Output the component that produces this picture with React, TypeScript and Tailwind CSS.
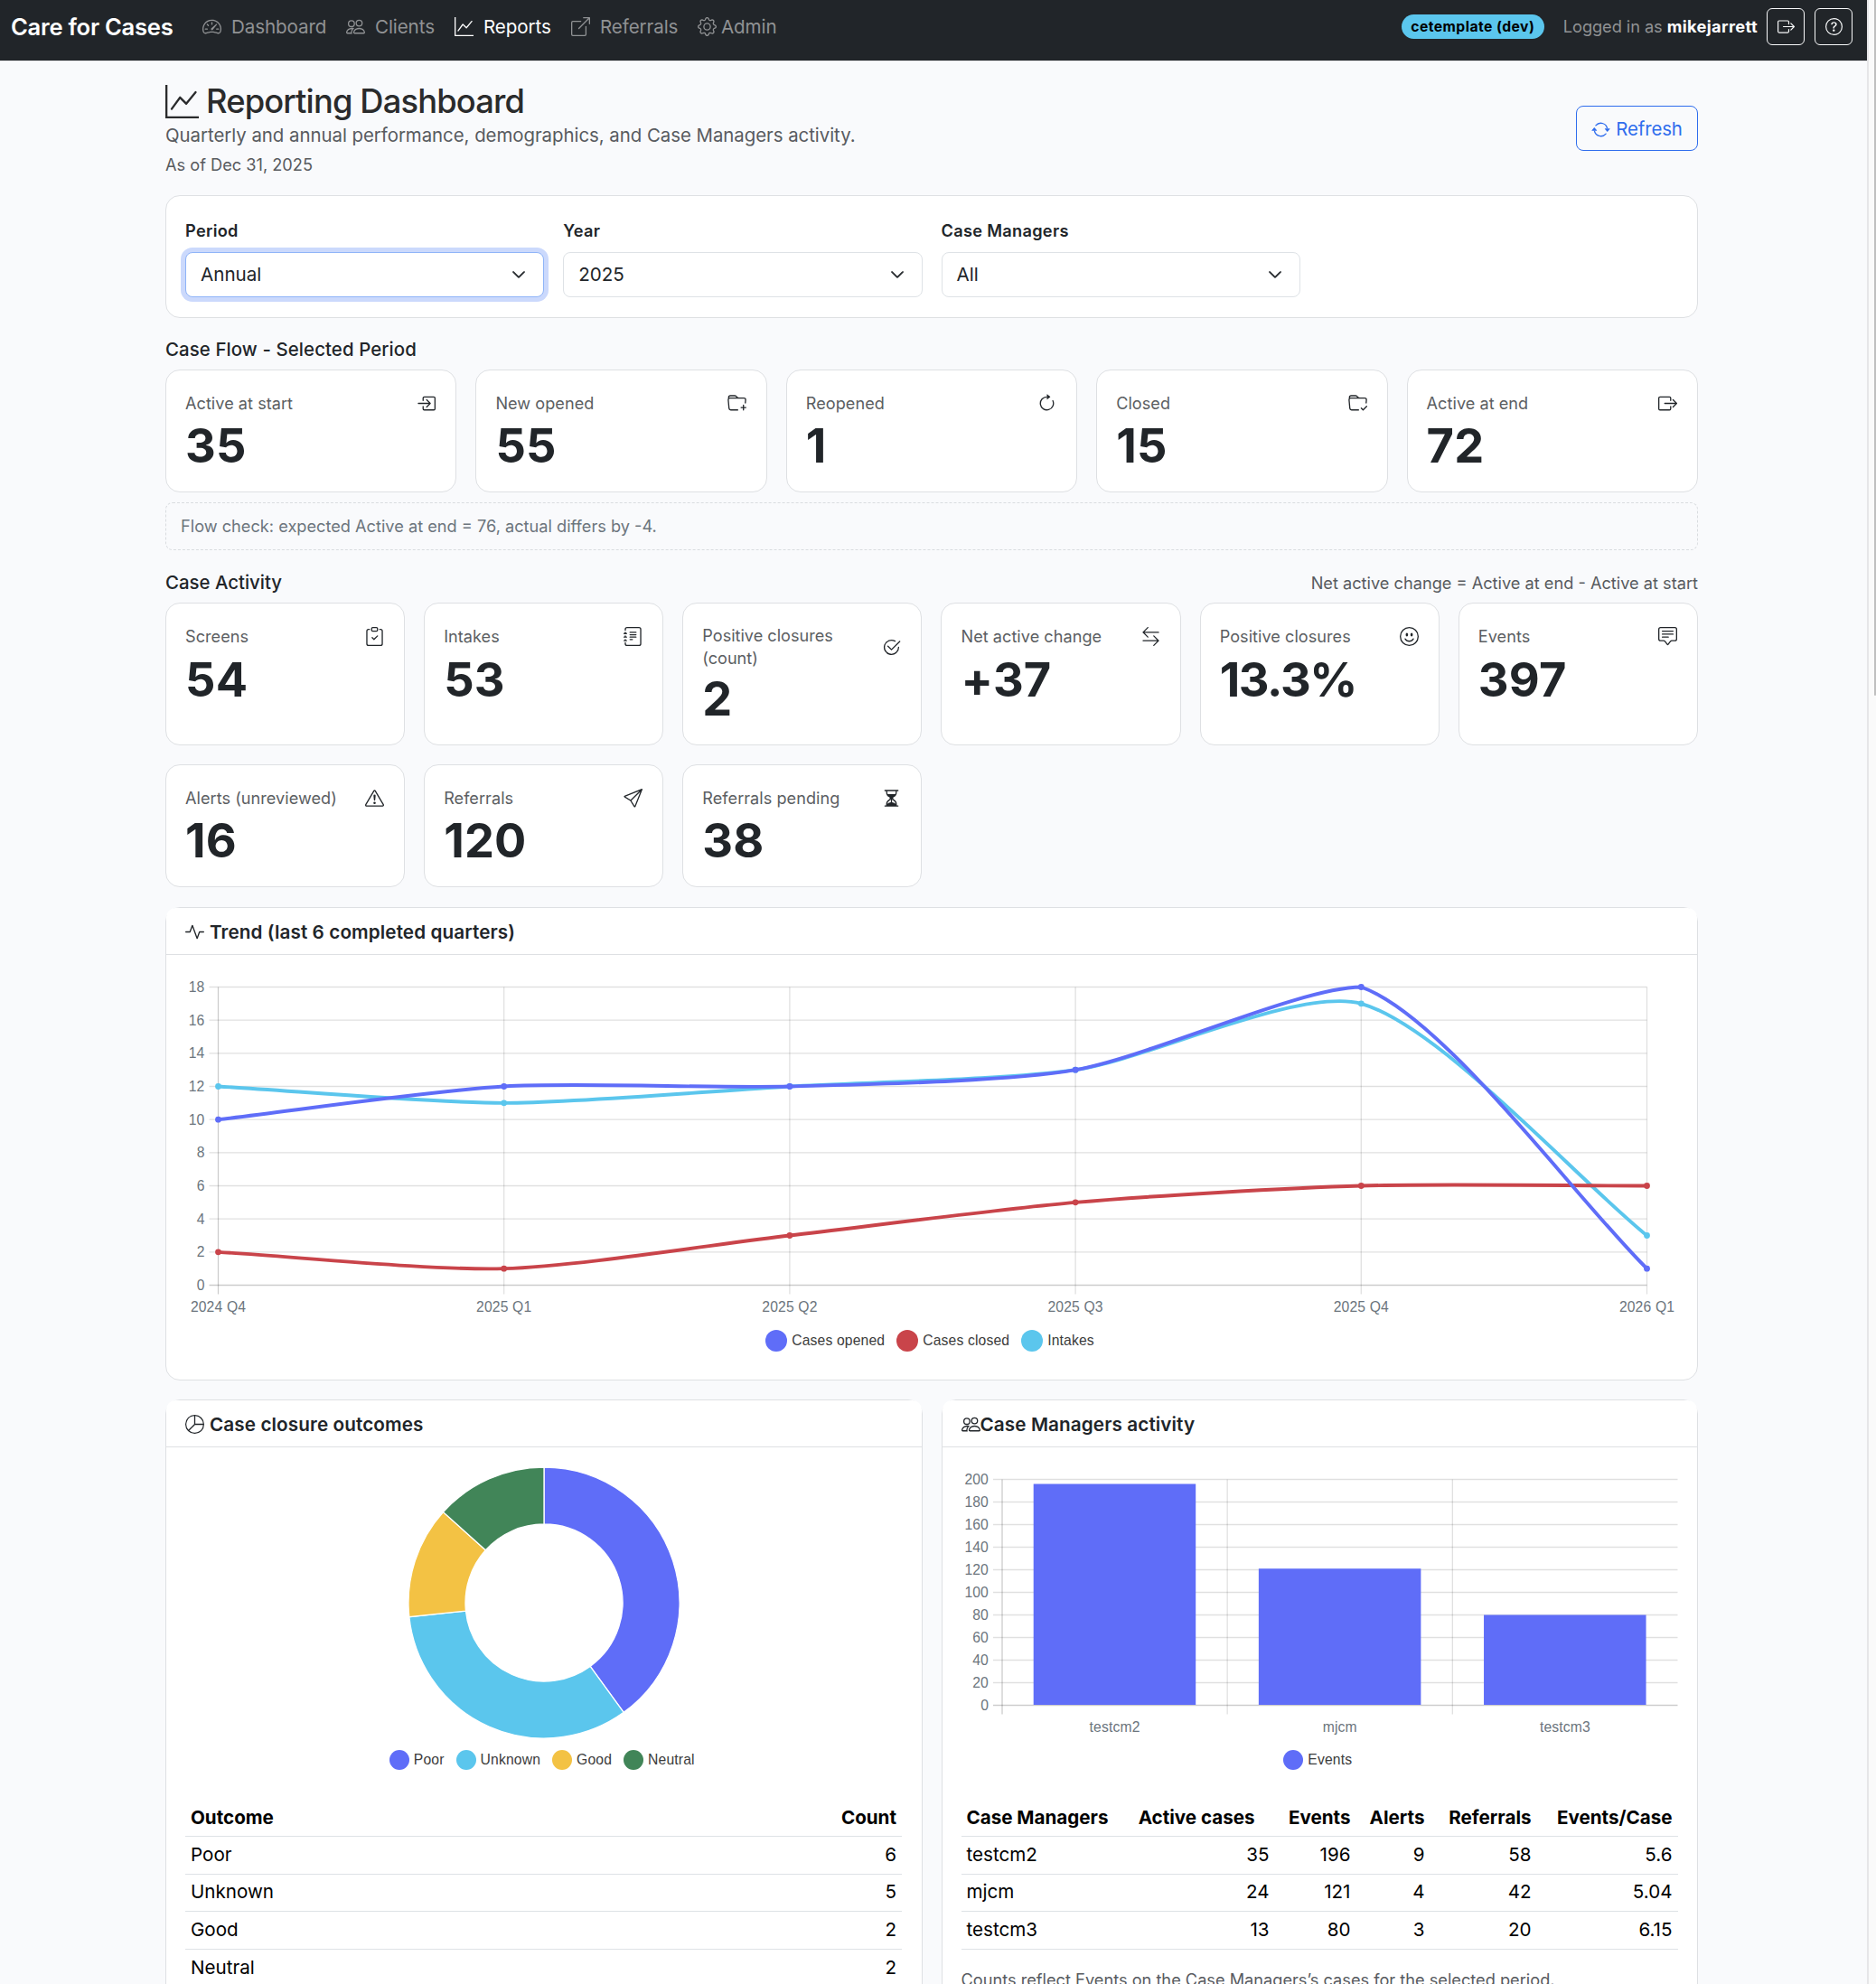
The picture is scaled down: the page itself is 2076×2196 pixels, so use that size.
import React from 'react';
import {
  BsSpeedometer2, BsPeople, BsGraphUp, BsBoxArrowUpRight, BsGear, BsBoxArrowRight, BsQuestionCircle,
  BsArrowRepeat, BsBoxArrowInRight, BsFolderPlus, BsArrowClockwise, BsFolderCheck, BsClipboardCheck,
  BsJournalText, BsCheck2Circle, BsArrowLeftRight, BsEmojiSmile, BsChatSquareText, BsExclamationTriangle,
  BsSend, BsHourglassSplit, BsActivity, BsPieChart, BsChevronDown
} from 'react-icons/bs';
import type { IconType } from 'react-icons';

const BLUE = '#5f6df8';
const RED = '#c9444a';
const CYAN = '#5bc6ed';
const YELLOW = '#f3c244';
const GREEN = '#418558';

const navItems: { label: string; icon: IconType; active?: boolean; tight?: boolean; width: string }[] = [
  { label: 'Dashboard', icon: BsSpeedometer2, width: 'w-[159px]' },
  { label: 'Clients', icon: BsPeople, width: 'w-[120px]' },
  { label: 'Reports', icon: BsGraphUp, active: true, width: 'w-[129px]' },
  { label: 'Referrals', icon: BsBoxArrowUpRight, width: 'w-[140px]' },
  { label: 'Admin', icon: BsGear, tight: true, width: 'w-[100px]' },
];

const filters = [
  { label: 'Period', value: 'Annual', focused: true },
  { label: 'Year', value: '2025' },
  { label: 'Case Managers', value: 'All' },
];

interface Stat {
  label: string;
  value: string;
  icon: IconType;
}

const flowStats: Stat[] = [
  { label: 'Active at start', value: '35', icon: BsBoxArrowInRight },
  { label: 'New opened', value: '55', icon: BsFolderPlus },
  { label: 'Reopened', value: '1', icon: BsArrowClockwise },
  { label: 'Closed', value: '15', icon: BsFolderCheck },
  { label: 'Active at end', value: '72', icon: BsBoxArrowRight },
];

const activityStats: Stat[] = [
  { label: 'Screens', value: '54', icon: BsClipboardCheck },
  { label: 'Intakes', value: '53', icon: BsJournalText },
  { label: 'Positive closures (count)', value: '2', icon: BsCheck2Circle },
  { label: 'Net active change', value: '+37', icon: BsArrowLeftRight },
  { label: 'Positive closures', value: '13.3%', icon: BsEmojiSmile },
  { label: 'Events', value: '397', icon: BsChatSquareText },
  { label: 'Alerts (unreviewed)', value: '16', icon: BsExclamationTriangle },
  { label: 'Referrals', value: '120', icon: BsSend },
  { label: 'Referrals pending', value: '38', icon: BsHourglassSplit },
];

const quarters = ['2024 Q4', '2025 Q1', '2025 Q2', '2025 Q3', '2025 Q4', '2026 Q1'];
const series = [
  { color: CYAN, data: [12, 11, 12, 13, 17, 3] },
  { color: RED, data: [2, 1, 3, 5, 6, 6] },
  { color: BLUE, data: [10, 12, 12, 13, 18, 1] },
];

const outcomes = [
  { name: 'Poor', count: 6, color: BLUE },
  { name: 'Unknown', count: 5, color: CYAN },
  { name: 'Good', count: 2, color: YELLOW },
  { name: 'Neutral', count: 2, color: GREEN },
];

const managers = [
  { name: 'testcm2', active: 35, events: 196, alerts: 9, referrals: 58, ratio: '5.6' },
  { name: 'mjcm', active: 24, events: 121, alerts: 4, referrals: 42, ratio: '5.04' },
  { name: 'testcm3', active: 13, events: 80, alerts: 3, referrals: 20, ratio: '6.15' },
];

// Same spline control points as Chart.js, clamped to the plot area
const splinePath = (pts: number[][], tension: number, top: number, bottom: number) => {
  const dist = (a: number[], b: number[]) => Math.hypot(a[0] - b[0], a[1] - b[1]);
  const clamp = (y: number) => Math.max(top, Math.min(bottom, y));
  const cps = pts.map((p, i) => {
    const prev = pts[Math.max(0, i - 1)];
    const next = pts[Math.min(pts.length - 1, i + 1)];
    const d1 = dist(prev, p);
    const d2 = dist(p, next);
    const fa = (tension * d1) / (d1 + d2);
    const fb = (tension * d2) / (d1 + d2);
    return {
      inX: p[0] - fa * (next[0] - prev[0]),
      inY: clamp(p[1] - fa * (next[1] - prev[1])),
      outX: p[0] + fb * (next[0] - prev[0]),
      outY: clamp(p[1] + fb * (next[1] - prev[1])),
    };
  });
  let d = `M${pts[0][0]} ${pts[0][1]}`;
  for (let i = 1; i < pts.length; i++) {
    d += ` C${cps[i - 1].outX} ${cps[i - 1].outY} ${cps[i].inX} ${cps[i].inY} ${pts[i][0]} ${pts[i][1]}`;
  }
  return d;
};

const chartText = "font-['Liberation_Sans',Arial,sans-serif] text-[15.7px] tracking-[0.15px]";

const StatCard: React.FC<{ stat: Stat; tall?: boolean }> = ({ stat, tall }) => {
  const Icon = stat.icon;
  const twoLines = stat.label.includes('(count)');
  return (
    <div className={`rounded-[16px] border border-[#dee0e3] bg-white pl-[21px] pr-[22px] ${twoLines ? 'pt-[23px]' : 'pt-[21px]'} ${tall ? 'h-[158px]' : 'h-[136px]'}`}>
      <div className={`flex items-center justify-between ${twoLines ? 'h-[50px]' : 'h-[31px]'}`}>
        <span className={`text-[18.1px] leading-[25px] text-[#5b5e62] ${twoLines ? 'w-[160px]' : 'whitespace-nowrap tracking-[0.04px]'}`}>{stat.label}</span>
        <Icon size={21} className="shrink-0 text-[#212529]" />
      </div>
      <div className={`text-[52.3px] font-bold leading-[60px] text-[#212529] ${stat.value.includes('%') ? 'tracking-[-1.4px]' : 'tracking-[0.2px]'} ${twoLines || tall ? 'mt-[2px]' : 'mt-[1px]'}`}>{stat.value}</div>
    </div>
  );
};

const CardHeader: React.FC<{ icon: IconType; title: string; tight?: boolean }> = ({ icon: Icon, title, tight }) => (
  <div className={`flex h-[52px] items-center rounded-t-[10px] border-b border-[#dee0e3] bg-white px-[21px] pt-[2px] ${tight ? '' : 'gap-[6px]'}`}>
    <Icon size={21} className="text-[#212529]" />
    <h2 className="text-[20.7px] font-semibold tracking-[0.1px] text-[#212529]">{title}</h2>
  </div>
);

const Legend: React.FC<{ items: { name: string; color: string }[]; size?: number }> = ({ items, size = 22 }) => (
  <div className="flex h-[24px] items-center justify-center gap-[13px] pr-[4px]">
    {items.map(item => (
      <div key={item.name} className="flex items-center gap-[5px]">
        <svg width={size} height={size} viewBox="0 0 24 24"><circle cx="12" cy="12" r="12" fill={item.color} /></svg>
        <span className={`${chartText} text-[#3c3c3c]`}>{item.name}</span>
      </div>
    ))}
  </div>
);

const TrendChart: React.FC = () => {
  const left = 57.5;
  const right = 1638.5;
  const top = 35.5;
  const bottom = 365.5;
  const x = (i: number) => left + ((right - left) * i) / 5;
  const y = (v: number) => bottom - ((bottom - top) * v) / 18;
  return (
    <svg width="1694" height="412" viewBox="0 0 1694 412" className="block">
      {[0, 2, 4, 6, 8, 10, 12, 14, 16, 18].map(v => (
        <g key={v}>
          <line x1={left - 10} x2={right} y1={y(v)} y2={y(v)} stroke="#000" strokeOpacity={v === 0 ? 0.2 : 0.12} strokeWidth="1.3" />
          <text x={left - 15} y={y(v) + 5.5} textAnchor="end" fill="#6c757d" className={chartText}>{v}</text>
        </g>
      ))}
      {quarters.map((q, i) => (
        <g key={q}>
          <line x1={x(i)} x2={x(i)} y1={top} y2={bottom + 10} stroke="#000" strokeOpacity={i === 0 ? 0.2 : 0.12} strokeWidth="1.3" />
          <text x={x(i)} y={bottom + 29.5} textAnchor="middle" fill="#6c757d" className={chartText}>{q}</text>
        </g>
      ))}
      {series.map(s => {
        const pts = s.data.map((v, i) => [x(i), y(v)]);
        return (
          <g key={s.color}>
            <path d={splinePath(pts, 0.25, top, bottom)} fill="none" stroke={s.color} strokeWidth="3.9" />
            {pts.map(([cx, cy]) => <circle key={cx} cx={cx} cy={cy} r="3.4" fill={s.color} />)}
          </g>
        );
      })}
    </svg>
  );
};

const OutcomeChart: React.FC = () => {
  const total = outcomes.reduce((sum, o) => sum + o.count, 0);
  const point = (t: number, r: number) => {
    const a = t * Math.PI * 2 - Math.PI / 2;
    return `${150 + r * Math.cos(a)} ${150 + r * Math.sin(a)}`;
  };
  let start = 0;
  return (
    <svg width="300" height="300" viewBox="0 0 300 300" className="block">
      {outcomes.map(o => {
        const from = start;
        const to = start + o.count / total;
        start = to;
        return (
          <path
            key={o.name}
            d={`M${point(from, 150)} A150 150 0 0 1 ${point(to, 150)} L${point(to, 87)} A87 87 0 0 0 ${point(from, 87)} Z`}
            fill={o.color}
            stroke="#fff"
            strokeWidth="1.3"
          />
        );
      })}
    </svg>
  );
};

const ManagersChart: React.FC = () => {
  const left = 66;
  const right = 813.5;
  const top = 35.5;
  const bottom = 285.5;
  const step = (right - left) / 3;
  const y = (v: number) => bottom - ((bottom - top) * v) / 200;
  return (
    <svg width="835" height="326" viewBox="0 0 835 326" className="block">
      {[0, 20, 40, 60, 80, 100, 120, 140, 160, 180, 200].map(v => (
        <g key={v}>
          <line x1={left - 10} x2={right} y1={y(v)} y2={y(v)} stroke="#000" strokeOpacity={v === 0 ? 0.2 : 0.12} strokeWidth="1.3" />
          <text x={left - 15} y={y(v) + 5.5} textAnchor="end" fill="#6c757d" className={chartText}>{v}</text>
        </g>
      ))}
      {managers.map((m, i) => (
        <g key={m.name}>
          <line x1={left + step * i} x2={left + step * i} y1={top} y2={bottom + 10} stroke="#000" strokeOpacity={i === 0 ? 0.2 : 0.12} strokeWidth="1.3" />
          <rect x={left + step * i + 34.7} y={y(m.events)} width="179.5" height={bottom - y(m.events) - 0.5} fill={BLUE} />
          <text x={left + step * (i + 0.5)} y={bottom + 29.5} textAnchor="middle" fill="#6c757d" className={chartText}>{m.name}</text>
        </g>
      ))}
    </svg>
  );
};

const App: React.FC = () => {
  return (
    <div className="flex h-[2196px] w-[2076px] overflow-hidden bg-[#f9fafc] font-[Inter,sans-serif] text-[#212529]">
      <div className="w-[2066px] shrink-0">
        <nav className="flex h-[67px] items-start justify-between bg-[#212529] pl-[12px] pr-[16px]">
          <div className="flex h-[60px] items-center">
            <span className="w-[212px] whitespace-nowrap text-[25.6px] font-semibold tracking-[-0.25px] text-white">Care for Cases</span>
            {navItems.map(item => {
              const Icon = item.icon;
              return (
                <a key={item.label} className={`flex items-center whitespace-nowrap text-[20.6px] tracking-[-0.1px] ${item.width} ${item.tight ? 'gap-[5px]' : 'gap-[11px]'} ${item.active ? 'text-white' : 'text-[#909294]'}`}>
                  <Icon size={21} />
                  {item.label}
                </a>
              );
            })}
          </div>
          <div className="flex h-[59px] items-center">
            <span className="mr-[21px] flex h-[27px] w-[158px] items-center justify-center rounded-full bg-[#5bc6ed] text-[15.7px] font-bold tracking-[0.45px] text-black">cetemplate (dev)</span>
            <span className="mr-[10px] whitespace-nowrap text-[18.3px] tracking-[-0.1px] text-[#909294]">Logged in as <b className="font-bold tracking-[0.35px] text-white">mikejarrett</b></span>
            <button className="mr-[11px] flex h-[41px] w-[42px] items-center justify-center rounded-[6px] border border-[#f8f9fa] text-[#f8f9fa]"><BsBoxArrowRight size={19} /></button>
            <button className="flex h-[41px] w-[42px] items-center justify-center rounded-[6px] border border-[#f8f9fa] text-[#f8f9fa]"><BsQuestionCircle size={19} /></button>
          </div>
        </nav>

        <div className="h-px bg-[#e6e7e9]" />
        <main className="ml-[183px] w-[1696px]">
          <header className="flex h-[148px] justify-between pt-[23px]">
            <div>
              <h1 className="flex h-[42px] items-center gap-[8px] text-[36.3px] font-medium tracking-[-0.85px] text-[#2a2b2c]"><BsGraphUp size={37} />Reporting Dashboard</h1>
              <p className="mt-[1px] text-[20.4px] leading-[31px] tracking-[-0.03px] text-[#585b5f]">Quarterly and annual performance, demographics, and Case Managers activity.</p>
              <p className="mt-[3px] text-[18.2px] leading-[28px] text-[#585b5f]">As of Dec 31, 2025</p>
            </div>
            <button className="mt-[26px] flex h-[50px] w-[135px] items-center justify-center gap-[6px] rounded-[8px] border border-[#2f6ded] pt-[2px] text-[20.4px] tracking-[-0.1px] text-[#2f6ded]"><BsArrowRepeat size={21} />Refresh</button>
          </header>

          <section className="grid h-[136px] grid-cols-4 gap-[21px] rounded-[16px] border border-[#dee0e3] bg-white px-[21px] pt-[24px]">
            {filters.map(f => (
              <div key={f.label}>
                <label className="block h-[38px] text-[18.2px] font-semibold leading-[28px] tracking-[0.3px]">{f.label}</label>
                <div className={`flex h-[50px] items-center justify-between rounded-[8px] border bg-white pl-[16px] pr-[19px] text-[20.6px] ${f.focused ? 'border-[#8fb4f8] ring-[5px] ring-[#cbd9fc]' : 'border-[#dee2e6]'}`}>
                  {f.value}
                  <BsChevronDown size={16} strokeWidth={1} />
                </div>
              </div>
            ))}
          </section>

          <h3 className="flex h-[57px] items-center pt-[14px] text-[20.4px] font-medium tracking-[0.1px]">Case Flow - Selected Period</h3>
          <section className="grid grid-cols-5 gap-[21px]">
            {flowStats.map(s => <StatCard key={s.label} stat={s} />)}
          </section>
          <div className="mt-[11px] flex h-[53px] items-center rounded-[8px] border border-dashed border-[#d9dcdf] px-[16px] text-[18.2px] text-[#6c757d]">Flow check: expected Active at end = 76, actual differs by -4.</div>

          <div className="flex h-[58.4px] items-center justify-between pt-[14px]">
            <h3 className="text-[20.4px] font-medium">Case Activity</h3>
            <span className="text-[18.2px] text-[#585b5f]">Net active change = Active at end - Active at start</span>
          </div>
          <section className="grid grid-cols-6 gap-[21px]">
            {activityStats.map((s, i) => <StatCard key={s.label} stat={s} tall={i < 6} />)}
          </section>

          <section className="mt-[21.6px] h-[524px] rounded-[16px] border border-[#dee0e3] bg-white">
            <CardHeader icon={BsActivity} title="Trend (last 6 completed quarters)" />
            <TrendChart />
            <div className="mt-[3px]">
              <Legend size={24} items={[{ name: 'Cases opened', color: BLUE }, { name: 'Cases closed', color: RED }, { name: 'Intakes', color: CYAN }]} />
            </div>
          </section>

          <div className="mt-[21px] grid grid-cols-2 gap-[21px]">
            <section className="h-[800px] rounded-[16px] border border-[#dee0e3] bg-white">
              <CardHeader icon={BsPieChart} title="Case closure outcomes" />
              <div className="flex h-[334px] justify-center pt-[22px]">
                <OutcomeChart />
              </div>
              <Legend items={outcomes} />
              <table className="mx-[21px] mt-[31px] w-[793px] text-[20.6px] text-black">
                <thead>
                  <tr className="h-[41.5px] border-b border-[#dee2e6]">
                    <th className="px-[6px] pt-[2px] text-left font-bold">Outcome</th>
                    <th className="px-[6px] pt-[2px] text-right font-bold">Count</th>
                  </tr>
                </thead>
                <tbody>
                  {outcomes.map(o => (
                    <tr key={o.name} className="h-[41.6px] border-b border-[#dee2e6]">
                      <td className="px-[6px]">{o.name}</td>
                      <td className="px-[6px] text-right">{o.count}</td>
                    </tr>
                  ))}
                </tbody>
              </table>
            </section>

            <section className="h-[800px] rounded-[16px] border border-[#dee0e3] bg-white">
              <CardHeader icon={BsPeople} title="Case Managers activity" tight />
              <ManagersChart />
              <div className="mt-[8px]">
                <Legend items={[{ name: 'Events', color: BLUE }]} />
              </div>
              <table className="mx-[21px] mt-[31px] w-[793px] table-fixed whitespace-nowrap text-[20.6px] text-black">
                <colgroup>
                  <col className="w-[190px]" />
                  <col className="w-[157px]" />
                  <col className="w-[90px]" />
                  <col className="w-[82px]" />
                  <col className="w-[118px]" />
                  <col />
                </colgroup>
                <thead>
                  <tr className="h-[41.5px] border-b border-[#dee2e6]">
                    <th className="px-[6px] pt-[2px] text-left font-bold">Case Managers</th>
                    <th className="pl-[6px] pr-[22px] pt-[2px] text-right font-bold">Active cases</th>
                    <th className="px-[6px] pt-[2px] text-right font-bold">Events</th>
                    <th className="px-[6px] pt-[2px] text-right font-bold">Alerts</th>
                    <th className="px-[6px] pt-[2px] text-right font-bold">Referrals</th>
                    <th className="px-[6px] pt-[2px] text-right font-bold">Events/Case</th>
                  </tr>
                </thead>
                <tbody>
                  {managers.map(m => (
                    <tr key={m.name} className="h-[41.6px] border-b border-[#dee2e6]">
                      <td className="px-[6px]">{m.name}</td>
                      <td className="px-[6px] text-right">{m.active}</td>
                      <td className="px-[6px] text-right">{m.events}</td>
                      <td className="px-[6px] text-right">{m.alerts}</td>
                      <td className="px-[6px] text-right">{m.referrals}</td>
                      <td className="px-[6px] text-right">{m.ratio}</td>
                    </tr>
                  ))}
                </tbody>
              </table>
              <p className="mx-[21px] mt-[19px] text-[18.2px] leading-[28px] text-[#585b5f]">Counts reflect Events on the Case Managers’s cases for the selected period.</p>
            </section>
          </div>
        </main>
      </div>

      <div className="flex w-[10px] shrink-0 justify-end border-l-2 border-[#e6e6e8] bg-[#fafafa]">
        <div className="h-[770px] w-[2px] rounded-b-full bg-[#bfbfbf]" />
      </div>
    </div>
  );
};

export default App;
